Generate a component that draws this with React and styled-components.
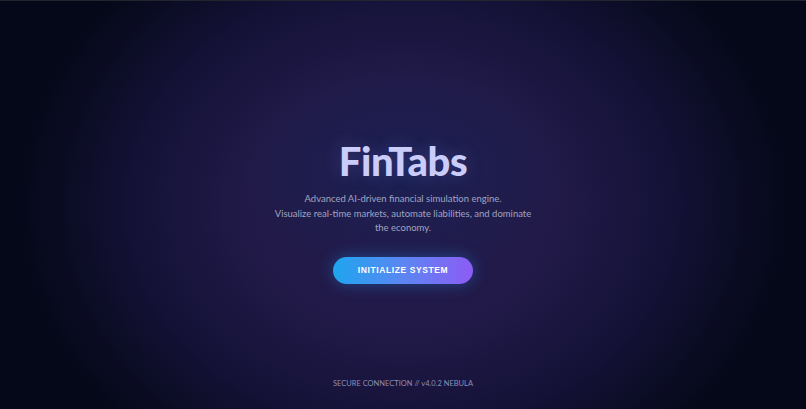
import styled, { createGlobalStyle } from "styled-components";

const GlobalStyle = createGlobalStyle`
    html, body {
        margin: 0;
        padding: 0;
        background: #040716;
    }
    * {
        box-sizing: border-box;
    }
`

const Pantalla = styled.main`
    position: relative;
    width: 100vw;
    height: 100vh;
    overflow: hidden;
    border-top: 1px solid #24242e;
    display: flex;
    flex-direction: column;
    align-items: center;
    font-family: "Lato", "Inter", sans-serif;
    background:
        radial-gradient(ellipse 20% 26% at 50% 42%, rgba(20, 38, 90, 0.5) 0%, rgba(20, 38, 90, 0) 100%),
        radial-gradient(ellipse 48% 78% at 50% 50%, #231b4b 0%, #211a48 40%, #16133a 65%, #050818 100%);
`

const Centro = styled.section`
    flex: 1;
    display: flex;
    flex-direction: column;
    align-items: center;
    padding-top: 136px;
`

const Titulo = styled.h1`
    margin: 0;
    font-family: "Lato", sans-serif;
    font-weight: 900;
    font-size: 40px;
    line-height: 48px;
    letter-spacing: -0.5px;
    color: #cacdfa;
    text-shadow: 0 0 18px rgba(140, 150, 255, 0.25);
`

const Descripcion = styled.p`
    margin: 7px 0 0;
    text-align: center;
    font-size: 9.5px;
    line-height: 14.5px;
    color: #a0a4c2;
`

const Linea = styled.span`
    display: block;
    white-space: nowrap;
`

const Boton = styled.button`
    margin-top: 21px;
    width: 140px;
    height: 27px;
    border: none;
    border-radius: 14px;
    background: linear-gradient(90deg, #1ea6ef 0%, #5b86f2 50%, #8d5cf4 100%);
    box-shadow: 0 0 16px rgba(40, 140, 240, 0.4);
    color: #ffffff;
    font-family: "Liberation Sans", Arial, sans-serif;
    font-weight: 700;
    font-size: 8.5px;
    letter-spacing: 0.6px;
    cursor: pointer;
`

const Pie = styled.footer`
    padding-bottom: 21px;
    font-size: 7.5px;
    color: #8d90b4;
`

const App = () => {
    return (
        <>
            <GlobalStyle />
            <Pantalla>
                <Centro>
                    <Titulo>FinTabs</Titulo>
                    <Descripcion>
                        <Linea>Advanced AI-driven financial simulation engine.</Linea>
                        <Linea>Visualize real-time markets, automate liabilities, and dominate</Linea>
                        <Linea>the economy.</Linea>
                    </Descripcion>
                    <Boton>INITIALIZE SYSTEM</Boton>
                </Centro>
                <Pie>SECURE CONNECTION // v4.0.2 NEBULA</Pie>
            </Pantalla>
        </>
    )
}

export default App;
